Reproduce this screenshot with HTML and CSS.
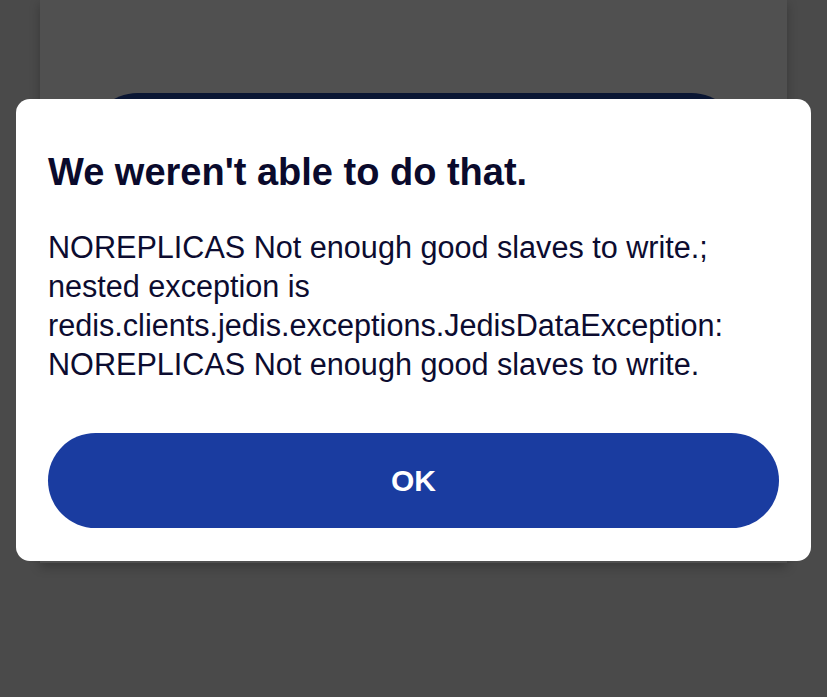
FILE: index.html
```html
<!DOCTYPE html>
<html lang="en">
<head>
<meta charset="utf-8">
<title>Error</title>
<link rel="stylesheet" href="styles.css">
</head>
<body>
<div class="page">
  <div class="page-button"></div>
</div>
<div class="modal" role="dialog">
  <h1 class="modal-title">We weren't able to do that.</h1>
  <p class="modal-text">NOREPLICAS Not enough good slaves to write.;<br>nested exception is redis.clients.jedis.exceptions.JedisDataException: NOREPLICAS Not enough good slaves to write.</p>
  <button class="modal-btn">OK</button>
</div>
</body>
</html>
```
FILE: styles.css
```css
html, body {
  margin: 0;
  padding: 0;
  height: 100%;
}
body {
  background: #4a4a4a;
  font-family: "Liberation Sans", Arial, sans-serif;
  overflow: hidden;
}
.page {
  margin: 0 40px;
  height: 563px;
  background: #505050;
  box-shadow: 0 4px 10px rgba(0,0,0,0.25);
  padding-top: 93px;
  box-sizing: border-box;
}
.page-button {
  margin: 0 48px 0 50px;
  height: 95px;
  border-radius: 48px;
  background: #0a1633;
}
.modal {
  position: absolute;
  top: 99px;
  left: 16px;
  width: 795px;
  height: 462px;
  box-sizing: border-box;
  background: #ffffff;
  border-radius: 14px;
  padding: 51px 32px 33px;
  display: flex;
  flex-direction: column;
}
.modal-title {
  margin: 0;
  font-size: 38px;
  line-height: 44px;
  font-weight: 700;
  color: #0a0a2c;
}
.modal-text {
  margin: 34px 0 0;
  font-size: 30.6px;
  line-height: 39px;
  color: #0c0c30;
}
.modal-btn {
  margin-top: auto;
  height: 95px;
  width: 100%;
  border: none;
  border-radius: 48px;
  background: #1a3ca0;
  color: #ffffff;
  font-family: "Liberation Sans", Arial, sans-serif;
  font-size: 30px;
  font-weight: 700;
}
```
